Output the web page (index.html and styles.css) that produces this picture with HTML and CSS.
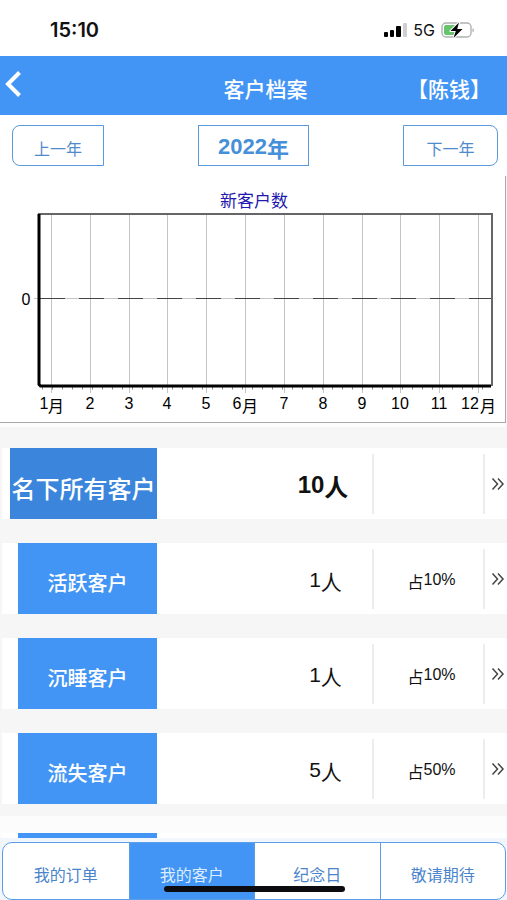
FILE: index.html
```html
<!DOCTYPE html>
<html lang="zh-CN">
<head>
<meta charset="utf-8">
<meta name="viewport" content="width=device-width, initial-scale=1">
<title>客户档案</title>
<link rel="stylesheet" href="styles.css">
</head>
<body>
<div class="app">
  <div class="status">
    <span class="time">15:10</span>
    <span class="signals">
      <svg width="24" height="16" viewBox="0 0 24 16" aria-hidden="true">
        <rect x="1" y="10" width="4" height="5" rx="1"/>
        <rect x="7" y="8" width="4" height="7" rx="1"/>
        <rect x="13" y="4" width="5" height="11" rx="1"/>
        <rect x="20" y="1" width="4" height="14" rx="1" fill="#cfcfcf"/>
      </svg>
      <span class="net">5G</span>
      <svg width="34" height="18" viewBox="0 0 34 18" aria-hidden="true">
        <rect x="1" y="2" width="29" height="14" rx="4" fill="#fff" stroke="#b0b3b0" stroke-width="1.4"/>
        <path d="M31.5 7v4.500q1.500-.7 1.500-2.250t-1.500-2.250z" fill="#b0b3b0"/>
        <path d="M5 4h9v10H5q-2 0-2-2V6q0-2 2-2z" fill="#66c56c"/>
        <path d="M18 1.500 9.500 10h5.300L12.500 17 21.500 8h-5.300z" stroke="#fff" stroke-width="2" stroke-linejoin="round"/>
        <path d="M18 1.500 9.500 10h5.300L12.500 17 21.500 8h-5.300z"/>
      </svg>
    </span>
  </div>

  <header class="bar">
    <button class="back" type="button" aria-label="返回">
      <svg width="18" height="28" viewBox="0 0 18 28" aria-hidden="true"><path d="M15.500 2.500 4 14 15.500 25.500" fill="none" stroke="#fff" stroke-width="4"/></svg>
    </button>
    <h1>客户档案</h1>
    <span class="who">【陈钱】</span>
  </header>

  <nav class="years">
    <button class="year prev" type="button">上一年</button>
    <button class="year current" type="button">2022<span class="unit">年</span></button>
    <button class="year next" type="button">下一年</button>
  </nav>

  <main>
    <section class="chart">
      <svg viewBox="0 0 505 246" role="img" aria-label="新客户数">
        <text class="chart-title" x="254" y="31">新客户数</text>
        <path class="grid" d="M51.500 38V217M90.500 38V217M129.500 38V217M167.500 38V217M206.500 38V217M245.500 38V217M284.500 38V217M323.500 38V217M362.500 38V217M400.500 38V217M439.500 38V217M478.500 38V217"/>
        <path class="grid" d="M34 122.500H491"/>
        <path class="minor" d="M42 211.500H491"/>
        <path class="zero" d="M40 122.500H491"/>
        <path class="frame" d="M38 38H492V210"/>
        <path class="axis" d="M39 38V208.500L40.500 210H491"/>
        <g class="ticks">
          <text x="26" y="129">0</text>
          <text x="44" y="233">1</text><text x="56" y="236">月</text>
          <text x="90" y="233">2</text>
          <text x="129" y="233">3</text>
          <text x="167" y="233">4</text>
          <text x="206" y="233">5</text>
          <text x="237" y="233">6</text><text x="250" y="236">月</text>
          <text x="284" y="233">7</text>
          <text x="323" y="233">8</text>
          <text x="362" y="233">9</text>
          <text x="400" y="233">10</text>
          <text x="439" y="233">11</text>
          <text x="470" y="233">12</text><text x="488" y="236">月</text>
        </g>
      </svg>
    </section>

    <section class="list">
      <a class="row total" href="#all">
        <span class="label">名下所有客户</span>
        <span class="count">10<span class="unit">人</span></span>
        <span class="share"></span>
        <span class="more"><svg width="14" height="14" viewBox="0 0 14 14" aria-hidden="true"><path d="m1.500 1.500 5 5.500-5 5.500M7 1.500 12 7l-5 5.500"/></svg></span>
      </a>
      <a class="row" href="#active">
        <span class="label">活跃客户</span>
        <span class="count">1<span class="unit">人</span></span>
        <span class="share"><span class="unit">占</span>10%</span>
        <span class="more"><svg width="14" height="14" viewBox="0 0 14 14" aria-hidden="true"><path d="m1.500 1.500 5 5.500-5 5.500M7 1.500 12 7l-5 5.500"/></svg></span>
      </a>
      <a class="row" href="#dormant">
        <span class="label">沉睡客户</span>
        <span class="count">1<span class="unit">人</span></span>
        <span class="share"><span class="unit">占</span>10%</span>
        <span class="more"><svg width="14" height="14" viewBox="0 0 14 14" aria-hidden="true"><path d="m1.500 1.500 5 5.500-5 5.500M7 1.500 12 7l-5 5.500"/></svg></span>
      </a>
      <a class="row" href="#lost">
        <span class="label">流失客户</span>
        <span class="count">5<span class="unit">人</span></span>
        <span class="share"><span class="unit">占</span>50%</span>
        <span class="more"><svg width="14" height="14" viewBox="0 0 14 14" aria-hidden="true"><path d="m1.500 1.500 5 5.500-5 5.500M7 1.500 12 7l-5 5.500"/></svg></span>
      </a>
    </section>
    <div class="extra">
      <div class="row"><span class="label"></span></div>
    </div>
  </main>

  <footer>
    <nav class="tabs">
      <a href="#orders">我的订单</a>
      <a href="#customers" class="on">我的客户</a>
      <a href="#days">纪念日</a>
      <a href="#soon">敬请期待</a>
    </nav>
    <div class="home"></div>
  </footer>
</div>
</body>
</html>
```

FILE: styles.css
```css
* {
  box-sizing: border-box;
}

body {
  margin: 0;
  background: #fff;
  color: #111;
  font-family: "Liberation Sans", "Noto Sans CJK SC", sans-serif;
}

a {
  color: inherit;
  text-decoration: none;
}

button {
  font-family: inherit;
  padding: 0;
  cursor: pointer;
}

.app {
  display: flex;
  flex-direction: column;
  height: 100vh;
  overflow: hidden;
}

.status {
  display: flex;
  justify-content: space-between;
  align-items: center;
  height: 56px;
  padding: 4px 32px 0 50px;
  flex: none;
}

.time {
  font: 600 20px/24px Inter, sans-serif;
}

.signals {
  display: flex;
  align-items: center;
  gap: 6px;
}

.net {
  font: 400 16px/20px Inter, sans-serif;
}

.bar {
  display: grid;
  grid-template-columns: 1fr auto 1fr;
  align-items: center;
  height: 59px;
  flex: none;
  padding: 0 16px 0 4px;
  background: #4395f5;
  color: #fff;
  font-size: 21px;
  font-weight: 500;
}

.bar h1 {
  margin: 0;
  padding: 8px 0 0 36px;
  font-size: 21px;
  font-weight: 500;
  line-height: 28px;
}

.who {
  justify-self: end;
  padding-top: 8px;
  line-height: 28px;
}

.back {
  display: flex;
  justify-self: start;
  padding-bottom: 4px;
  border: 0;
  background: none;
}

.years {
  display: flex;
  justify-content: space-between;
  flex: none;
  padding: 10px 9px 10px 12px;
}

.year {
  width: 95px;
  height: 41px;
  padding-top: 4px;
  border: 1px solid #5b99d8;
  background: #fff;
  color: #4f8bcb;
  font-size: 16px;
}

.prev {
  width: 92px;
  border-radius: 8px 0 0 8px;
}

.next {
  border-radius: 0 8px 8px 0;
}

.current {
  width: 111px;
  padding-top: 2px;
  color: #468fd9;
  font-size: 22px;
  font-weight: 700;
}

.unit {
  vertical-align: -3px;
}

main {
  flex: 1;
  min-height: 0;
  overflow: hidden;
  background: #f6f6f6;
}

.chart {
  margin-right: 1px;
  border: solid #a8a8a8;
  border-width: 0 1px 1px 0;
  background: #fff;
  box-shadow: 0 4px #fcfcfc;
}

.chart svg {
  display: block;
  width: 100%;
}

.chart text {
  font-size: 16px;
  text-anchor: middle;
}

.chart .chart-title {
  fill: #2218b0;
  font-size: 17px;
}

.grid,
.minor,
.zero,
.frame,
.axis {
  fill: none;
}

.grid {
  stroke: #c4c4c4;
}

.zero {
  stroke: #444;
  stroke-width: 1;
  stroke-dasharray: 25 14;
}

.minor {
  stroke: #888;
  stroke-width: 4;
  stroke-dasharray: 1 9;
}

.frame {
  stroke: #666;
  stroke-width: 2;
}

.axis {
  stroke: #000;
  stroke-width: 3;
}

.list {
  display: grid;
  gap: 24px;
  padding: 25px 0 12px 2px;
}

.row {
  display: flex;
  align-items: center;
  height: 71px;
  padding-left: 16px;
  background: #fff;
}

.label {
  display: flex;
  align-items: center;
  justify-content: center;
  width: 139px;
  height: 100%;
  padding-top: 8px;
  flex: none;
  background: #4395f5;
  color: #fff;
  font-size: 20px;
  font-weight: 500;
}

.count {
  flex: 1;
  padding: 4px 0 0 122px;
  font-size: 21px;
  text-align: center;
}

.share {
  display: block;
  width: 113px;
  height: 60px;
  padding-left: 6px;
  border: solid #ededed;
  border-width: 0 2px;
  font-size: 16px;
  line-height: 62px;
  text-align: center;
}

.more {
  display: flex;
  justify-content: center;
  width: 22px;
  padding-left: 4px;
}

.more svg {
  flex: none;
  fill: none;
  stroke: #444;
  stroke-width: 1.500;
}

.total {
  padding-left: 8px;
}

.total .label {
  width: 147px;
  background: #3b86dc;
  font-size: 24px;
}

.total .count {
  padding-left: 117px;
  font-size: 24px;
  font-weight: 700;
}

.extra {
  padding: 17px 0 0 2px;
  background: #fcfcfc;
}

footer {
  position: relative;
  flex: none;
  padding: 4px 1px 0 2px;
  background: #f0f6fc;
}

.tabs {
  display: grid;
  grid-template-columns: repeat(4, 1fr);
  height: 58px;
  border: 1px solid #5b9ee6;
  border-radius: 10px;
  background: #fff;
  overflow: hidden;
  color: #4a84cc;
  font-size: 16px;
}

.tabs a {
  display: flex;
  align-items: center;
  justify-content: center;
  padding-top: 6px;
}

.tabs a + a {
  border-left: 1px solid #5b9ee6;
}

.tabs .on {
  background: #4395f5;
  color: #dcecff;
}

.home {
  position: absolute;
  bottom: 8px;
  left: 50%;
  width: 181px;
  height: 6px;
  margin-left: -90px;
  border-radius: 3px;
  background: #0c0c10;
}
```
